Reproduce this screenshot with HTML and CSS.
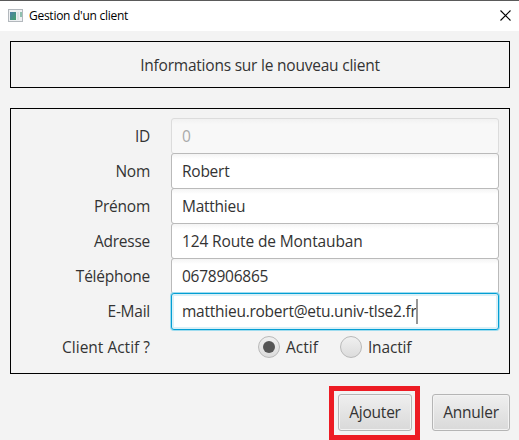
FILE: index.html
```html
<!DOCTYPE html>
<html lang="fr">
<head>
<meta charset="utf-8">
<title>Gestion d'un client</title>
<link rel="stylesheet" href="styles.css">
</head>
<body>
<header class="titlebar">
  <svg class="app-icon" width="16" height="14" viewBox="0 0 16 14">
    <defs><linearGradient id="pane" x1="0" y1="0" x2="1" y2="1"><stop offset="0" stop-color="#4d7fa8"/><stop offset="1" stop-color="#43a06b"/></linearGradient></defs>
    <rect x=".5" y=".5" width="14" height="12" fill="#eef0f2" stroke="#b3b8bd"/>
    <rect x="2" y="3" width="6" height="8" fill="url(#pane)"/>
    <rect x="9" y="3" width="2" height="8" fill="#dce3e4"/>
    <rect x="12" y="3" width="2" height="5" fill="#8fc0ae"/>
  </svg>
  <h1 class="title">Gestion d'un client</h1>
  <svg class="close" width="11" height="11" viewBox="0 0 11 11"><path d="M.5 .5l10 10M10.5 .5l-10 10" stroke="#000" stroke-width="1.1"/></svg>
</header>
<main class="content">
  <section class="heading"><span class="heading-text">Informations sur le nouveau client</span></section>
  <section class="form">
    <div class="row"><span class="label">ID</span><div class="field disabled">0</div></div>
    <div class="row"><span class="label">Nom</span><div class="field">Robert</div></div>
    <div class="row"><span class="label">Prénom</span><div class="field">Matthieu</div></div>
    <div class="row"><span class="label">Adresse</span><div class="field"><span class="address">124 Route de Montauban</span></div></div>
    <div class="row"><span class="label">Téléphone</span><div class="field">0678906865</div></div>
    <div class="row"><span class="label">E-Mail</span><div class="field focused"><span>matthieu.robert@etu.univ-tlse2.fr</span><i class="caret"></i></div></div>
    <div class="row last"><span class="label status">Client Actif ?</span>
      <div class="choices">
        <span class="choice"><i class="radio checked"></i><span class="status">Actif</span></span>
        <span class="choice"><i class="radio"></i><span class="inactive">Inactif</span></span>
      </div>
    </div>
  </section>
  <footer class="actions">
    <div class="highlight"><div class="button add">Ajouter</div></div>
    <div class="button cancel">Annuler</div>
  </footer>
</main>
</body>
</html>
```
FILE: styles.css
```css
* { box-sizing: border-box; }
body {
  margin: 0;
  width: 519px;
  height: 440px;
  overflow: hidden;
  background: #f3f3f3;
  color: #333;
  font: 15.5px/20px "Open Sans", "Noto Sans", sans-serif;
  letter-spacing: -0.25px;
  white-space: nowrap;
}
.titlebar {
  display: flex;
  align-items: center;
  height: 31px;
  padding: 0 8px;
  border-top: 1px solid #5a5a5a;
  background: #fff;
}
.title {
  margin: 0 auto 0 5px;
  color: #000;
  font-size: 12px;
  font-weight: 400;
  letter-spacing: -0.27px;
}
.close { position: relative; top: -1px; }
.content { padding: 10px 9px 0 10px; }
.heading {
  display: flex;
  align-items: center;
  justify-content: center;
  height: 47px;
  border: 1px solid #000;
}
.heading-text { letter-spacing: -0.22px; }
.form {
  height: 266px;
  margin-top: 20px;
  padding: 9px 10px 0;
  border: 1px solid #000;
}
.row {
  display: grid;
  grid-template-columns: 129px 328px;
  column-gap: 21px;
  align-items: center;
  height: 35px;
}
.last { height: 37px; }
.label { text-align: right; }
.field {
  display: flex;
  align-items: center;
  height: 36px;
  margin-bottom: -1px;
  padding-left: 10px;
  border: 1px solid #bababa;
  border-radius: 3px;
  background: linear-gradient(#f4f4f4, #fff 5px);
}
.address { letter-spacing: -0.13px; }
.disabled {
  border-color: #dcdcdc;
  background: linear-gradient(#f1f1f1, #f8f8f8 5px);
  color: #aaa;
}
.focused {
  position: relative;
  height: 37px;
  margin-bottom: -2px;
  padding-bottom: 1px;
  border-color: #039ed3;
  background: #fff;
  box-shadow: inset 0 0 0 2px #daf0f7, 0 0 0 1px #9fdcef;
}
.caret {
  width: 2px;
  height: 25px;
  margin-left: -1px;
  background: #969696;
}
.choices {
  display: flex;
  padding-left: 87px;
  gap: 22px;
}
.choice { display: flex; align-items: center; gap: 6px; }
.status { letter-spacing: 0; }
.inactive { letter-spacing: -0.15px; }
.radio {
  display: grid;
  place-items: center;
  width: 22px;
  height: 22px;
  border: 1px solid #b9b9b9;
  border-radius: 50%;
  background: linear-gradient(#f0f0f0, #dcdcdc);
}
.checked::after {
  content: "";
  width: 12px;
  height: 12px;
  border-radius: 50%;
  background: #555;
}
.actions {
  display: flex;
  justify-content: flex-end;
  align-items: flex-start;
  gap: 12px;
  margin-top: 12px;
}
.highlight {
  padding: 3px 3px 4px 4px;
  border: 5px solid #ed1c24;
}
.button {
  display: flex;
  align-items: center;
  justify-content: center;
  height: 37px;
  padding-bottom: 1px;
  border: 1px solid #b5b5b5;
  border-radius: 3px;
  background: linear-gradient(#efefef, #d9d9d9);
  box-shadow: inset 0 0 0 1px #f3f3f3;
}
.add { width: 74px; }
.cancel { width: 78px; margin-top: 8px; }
```
